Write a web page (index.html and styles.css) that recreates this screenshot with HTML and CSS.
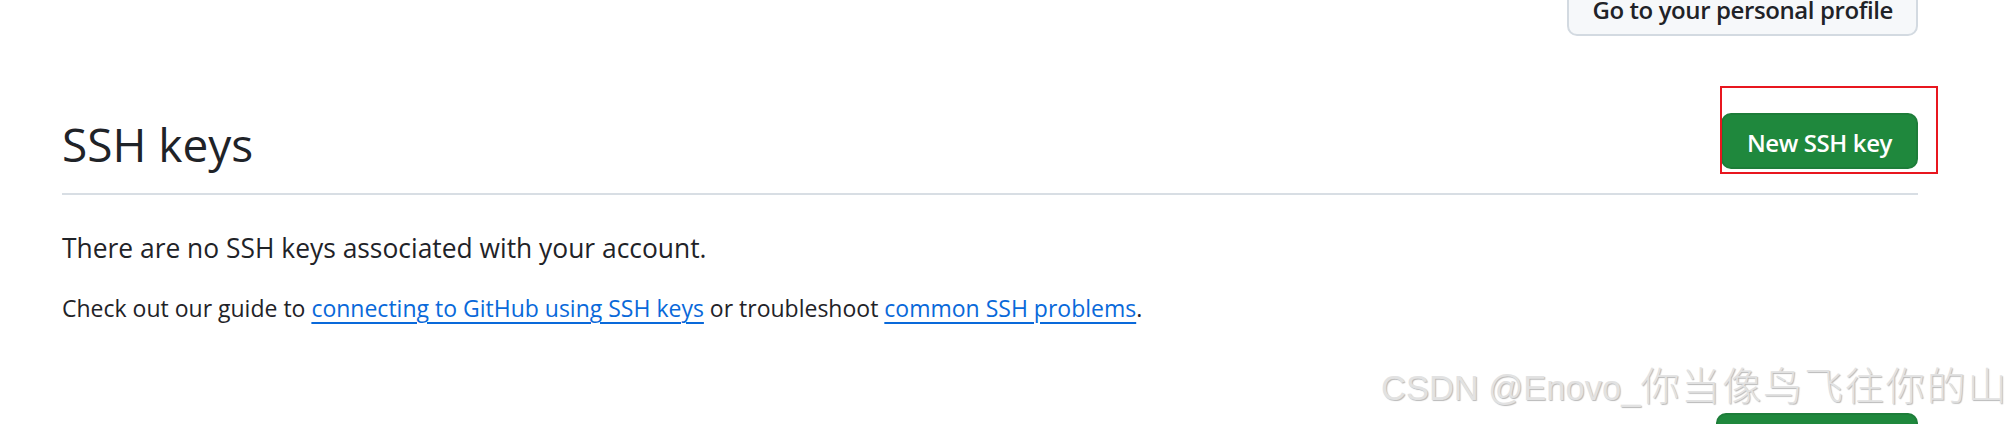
FILE: index.html
```html
<!DOCTYPE html>
<html lang="en">
<head>
<meta charset="utf-8">
<title>SSH keys</title>
<link rel="stylesheet" href="styles.css">
</head>
<body>
<div class="page">
  <div class="topbar">
    <a class="btn btn-default" href="#">Go to your personal profile</a>
  </div>

  <div class="subhead">
    <h2 class="subhead-heading">SSH keys</h2>
    <div class="subhead-actions">
      <a class="btn btn-primary" href="#">New SSH key</a>
      <span class="annotation"></span>
    </div>
  </div>

  <p class="blankslate-text">There are no SSH keys associated with your account.</p>
  <p class="help-text">Check out our guide to <a class="link" href="#">connecting to GitHub using SSH keys</a> or troubleshoot <a class="link" href="#">common SSH problems</a>.</p>

  <div class="next-section">
    <a class="btn btn-primary" href="#">New GPG key</a>
  </div>
</div>

<div class="watermark"><span class="wm-latin">CSDN @Enovo_</span><span class="wm-cjk">你当像鸟飞往你的山</span></div>
</body>
</html>
```

FILE: styles.css
```css
html, body {
  margin: 0;
  padding: 0;
  background: #ffffff;
  overflow: hidden;
}

body {
  font-family: "Open Sans", "Noto Sans", sans-serif;
  color: #1f2328;
}

.page {
  padding: 0 95px 0 62px;
}

.topbar {
  display: flex;
  justify-content: flex-end;
  margin-top: -20px;
}

.btn {
  box-sizing: border-box;
  display: inline-flex;
  align-items: center;
  height: 56px;
  padding: 3px 24px 0;
  border-radius: 10px;
  font-size: 24px;
  font-weight: 600;
  letter-spacing: -0.4px;
  text-decoration: none;
  white-space: nowrap;
}

.btn-default {
  padding-left: 23px;
  padding-right: 23px;
  background: #f6f8fa;
  border: 2px solid #d3dae1;
  color: #1f2328;
}

.btn-primary {
  background: #1f883d;
  border: 2px solid #1d7d39;
  color: #ffffff;
}

.subhead {
  display: flex;
  justify-content: space-between;
  align-items: flex-start;
  margin-top: 77px;
  padding-bottom: 18px;
  border-bottom: 2px solid #d8dee4;
}

.subhead-heading {
  margin: 0;
  font-size: 46px;
  font-weight: 400;
  line-height: 62px;
  color: #1f2328;
}

.subhead-actions {
  position: relative;
}

.annotation {
  position: absolute;
  left: -1px;
  top: -27px;
  right: -20px;
  bottom: -5px;
  border: 2px solid #e8161f;
  pointer-events: none;
}

.blankslate-text {
  margin: 33px 0 0;
  font-size: 26.4px;
  line-height: 40px;
}

.help-text {
  margin: 22px 0 0;
  font-size: 23px;
  line-height: 36px;
}

.link {
  color: #0969da;
  text-decoration: underline;
  text-decoration-thickness: 2px;
  text-underline-offset: 5px;
}

.next-section {
  display: flex;
  justify-content: flex-end;
  margin-top: 87px;
}

.watermark {
  position: absolute;
  left: 1381px;
  top: 361px;
  white-space: nowrap;
  color: #e2e2e2;
  text-shadow: 1px 1px 1px rgba(0, 0, 0, 0.28);
  line-height: 44px;
}

.wm-latin {
  font-family: "Liberation Sans", Arial, sans-serif;
  font-size: 34.5px;
}

.wm-cjk {
  font-family: "Noto Sans CJK SC", sans-serif;
  font-size: 39px;
  font-weight: 300;
  letter-spacing: 1.9px;
}
```
